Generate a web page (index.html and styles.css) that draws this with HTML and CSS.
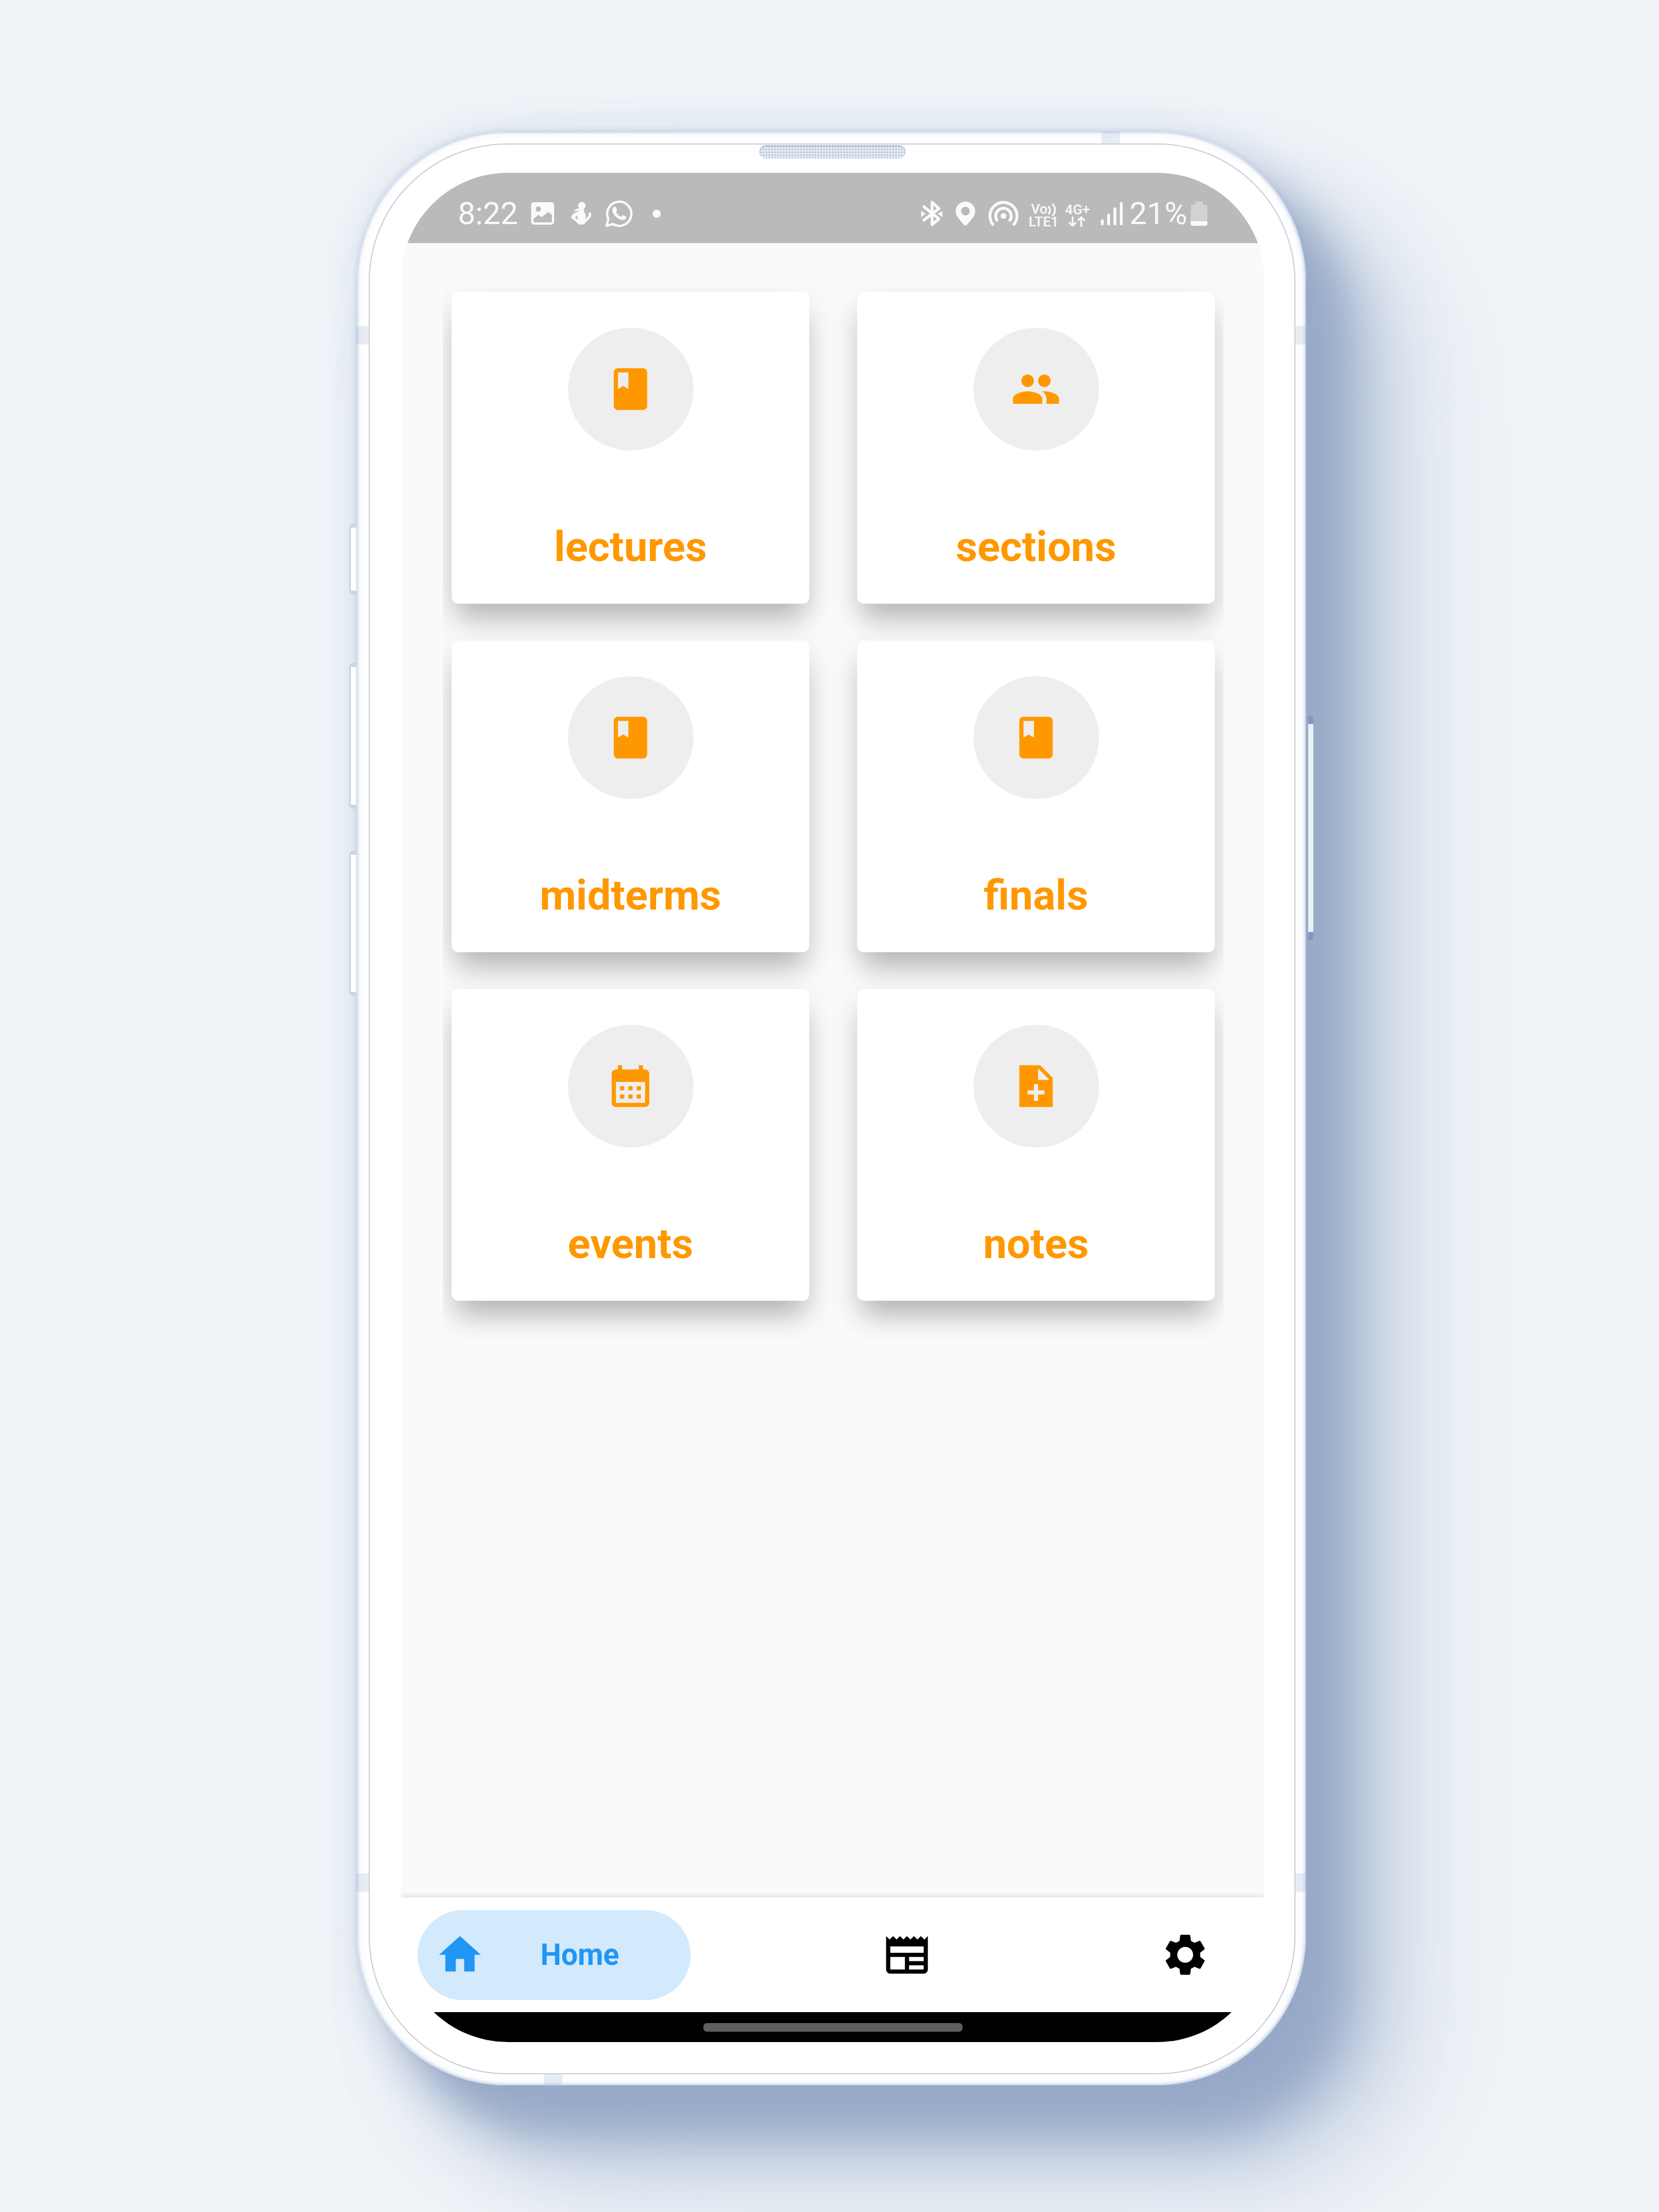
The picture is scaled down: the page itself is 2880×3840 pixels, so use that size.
FILE: index.html
```html
<!DOCTYPE html>
<html lang="en">
<head>
<meta charset="utf-8">
<meta name="viewport" content="width=device-width, initial-scale=1">
<title>Home</title>
<link rel="stylesheet" href="styles.css">
</head>
<body>
<main class="stage">
  <div class="phone">
    <span class="side-key side-key--mute"></span>
    <span class="side-key side-key--up"></span>
    <span class="side-key side-key--down"></span>
    <span class="power-key"></span>
    <span class="band band--top"></span>
    <span class="band band--bottom"></span>
    <span class="band band--left band--high"></span>
    <span class="band band--left band--low"></span>
    <span class="band band--right band--high"></span>
    <span class="band band--right band--low"></span>
    <div class="bezel">
      <span class="speaker"></span>
      <div class="screen">
        <header class="status">
          <div class="status-group status-group--left">
            <span class="status-text">8:22</span>
            <svg width="40" height="40" viewBox="0 0 40 40" aria-hidden="true"><path fill-rule="evenodd" d="M5 0h30a5 5 0 0 1 5 5v29a5 5 0 0 1-5 5H5a5 5 0 0 1-5-5V5a5 5 0 0 1 5-5zM4 29v4a2 2 0 0 0 2 2h28a2 2 0 0 0 2-2V22l-6-5-12 9-5-4zM12.500 7.500a4.500 4.500 0 1 0 .1 0z"/></svg>
            <svg width="42" height="42" viewBox="0 0 42 42" aria-hidden="true"><circle cx="25" cy="7" r="6.500"/><path d="M22 11h6l1 7c4 4 3 9 2 13l6-7v-5h4v5c0 5-6 8-10 13-3 4-11 4-14 0-4-5-9-7-11-10 2-5 8-8 14-11zM13 27l5 5-1-8z" fill-rule="evenodd"/><path d="M23 12c-7-1-9 2-13 5l6-1 6-1z"/></svg>
            <svg width="48" height="48" viewBox="0 0 48 48" aria-hidden="true"><path d="M3 45l3-12a21 21 0 1 1 8 9z" fill="none" stroke="#fafafa" stroke-width="4" stroke-linejoin="round"/><path d="M14 14c2-3 5-3 6 0l1 4c0 2-2 2-1 4 2 4 5 6 8 7 2 0 2-3 4-2l5 2c2 3-3 6-6 6-9-1-18-10-18-17z"/></svg>
            <svg width="38" height="16" viewBox="0 0 38 16" aria-hidden="true"><circle cx="19" cy="8" r="7"/></svg>
          </div>
          <div class="status-group status-group--right">
            <svg width="60" height="46" viewBox="0 0 60 46" aria-hidden="true"><path d="M17 11l26 21-12 10V3l12 11-26 20" fill="none" stroke="#fafafa" stroke-width="5" stroke-linejoin="round" stroke-linecap="round"/><path d="M12 18l8 5-8 6zM49 18l-8 5 8 6z"/></svg>
            <svg width="46" height="42" viewBox="0 0 46 42" aria-hidden="true"><path fill-rule="evenodd" d="M23 0a17 17 0 0 1 17 17c0 8-7 14-14 23q-3 3-6 0C13 31 6 25 6 17A17 17 0 0 1 23 0zM23 9a7.500 7.500 0 1 0 .1 0z"/></svg>
            <svg width="74" height="46" viewBox="0 0 74 46" aria-hidden="true"><circle cx="37" cy="27" r="5"/><g fill="none" stroke="#fafafa" stroke-width="5"><path d="M20 43a23.500 23.500 0 1 1 34 0"/><path d="M27 36a13.500 13.500 0 1 1 20 0"/></g></svg>
            <span class="network network--lte"><span class="network-row network-row--volte">Vo<svg width="16" height="24" viewBox="0 0 16 24" aria-hidden="true"><path d="M2 6q6 7 0 14M9 2q9 10 0 21" fill="none" stroke="#fafafa" stroke-width="3"/></svg></span><span class="network-row">LTE1</span></span>
            <span class="network network--4g"><span class="network-row">4G+</span><svg class="arrows" width="32" height="20" viewBox="0 0 30 20" aria-hidden="true"><path d="M7 1v16M1 11l6 6 6-6M22 19V2M16 8l6-6 6 6" fill="none" stroke="#fafafa" stroke-width="3"/></svg></span>
            <svg width="44" height="40" viewBox="0 0 44 40" aria-hidden="true"><rect y="30" width="5" height="10" rx="2"/><rect x="11" y="20" width="5" height="20" rx="2"/><rect x="22" y="9" width="5" height="31" rx="2"/><rect x="33" width="5" height="40" rx="2"/></svg>
            <span class="status-text">21%</span>
            <svg width="29" height="44" viewBox="0 0 29 44" aria-hidden="true"><path fill="#d2d2d2" d="M8 1h13v5h4a4 4 0 0 1 4 4v29a4 4 0 0 1-4 4H4a4 4 0 0 1-4-4V10a4 4 0 0 1 4-4h4z"/><path d="M0 35h29v4a4 4 0 0 1-4 4H4a4 4 0 0 1-4-4z"/></svg>
          </div>
        </header>
        <section class="cards">
          <a class="card" href="#lectures"><span class="disc"><svg class="icon" viewBox="0 0 24 24" aria-hidden="true"><path d="M18 2H6c-1.100 0-2 .9-2 2v16c0 1.100.9 2 2 2h12c1.100 0 2-.9 2-2V4c0-1.100-.9-2-2-2zM6 4h5v8l-2.500-1.500L6 12V4z"/></svg></span><span class="card-label">lectures</span></a>
          <a class="card" href="#sections"><span class="disc"><svg class="icon" viewBox="0 0 24 24" aria-hidden="true"><path d="M16 11c1.660 0 2.990-1.340 2.990-3S17.660 5 16 5s-3 1.340-3 3 1.340 3 3 3zm-8 0c1.660 0 2.990-1.340 2.990-3S9.660 5 8 5 5 6.340 5 8s1.340 3 3 3zm0 2c-2.330 0-7 1.170-7 3.500V19h14v-2.500c0-2.330-4.670-3.500-7-3.500zm8 0c-.29 0-.62.02-.97.05 1.160.84 1.970 1.970 1.970 3.450V19h6v-2.500c0-2.330-4.670-3.500-7-3.500z"/></svg></span><span class="card-label">sections</span></a>
          <a class="card" href="#midterms"><span class="disc"><svg class="icon" viewBox="0 0 24 24" aria-hidden="true"><path d="M18 2H6c-1.100 0-2 .9-2 2v16c0 1.100.9 2 2 2h12c1.100 0 2-.9 2-2V4c0-1.100-.9-2-2-2zM6 4h5v8l-2.500-1.500L6 12V4z"/></svg></span><span class="card-label">midterms</span></a>
          <a class="card" href="#finals"><span class="disc"><svg class="icon" viewBox="0 0 24 24" aria-hidden="true"><path d="M18 2H6c-1.100 0-2 .9-2 2v16c0 1.100.9 2 2 2h12c1.100 0 2-.9 2-2V4c0-1.100-.9-2-2-2zM6 4h5v8l-2.500-1.500L6 12V4z"/></svg></span><span class="card-label">finals</span></a>
          <a class="card" href="#events"><span class="disc"><svg class="icon" viewBox="0 0 24 24" aria-hidden="true"><path d="M19 4h-1V2h-2v2H8V2H6v2H5c-1.110 0-1.990.9-1.990 2L3 20c0 1.100.89 2 2 2h14c1.100 0 2-.9 2-2V6c0-1.100-.9-2-2-2zm0 16H5V10h14v10zM9 14H7v-2h2v2zm4 0h-2v-2h2v2zm4 0h-2v-2h2v2zm-8 4H7v-2h2v2zm4 0h-2v-2h2v2zm4 0h-2v-2h2v2z"/></svg></span><span class="card-label">events</span></a>
          <a class="card" href="#notes"><span class="disc"><svg class="icon" viewBox="0 0 24 24" aria-hidden="true"><path d="M14 2H4v20h16V8l-6-6zm2 14h-3v3h-2v-3H8v-2h3v-3h2v3h3v2zm-3-7V3.500L18.500 9H13z"/></svg></span><span class="card-label">notes</span></a>
        </section>
        <nav class="tabs">
          <button class="tab tab--active" type="button"><svg class="icon" viewBox="0 0 24 24" aria-hidden="true"><path d="M10 20v-6h4v6h5v-8h3L12 3 2 12h3v8z"/></svg><span class="tab-label">Home</span></button>
          <button class="tab" type="button" aria-label="News"><svg class="icon" viewBox="0 0 24 24" aria-hidden="true"><path d="M22 3l-1.670 1.670L18.670 3 17 4.670 15.330 3l-1.660 1.670L12 3l-1.670 1.670L8.670 3 7 4.670 5.330 3 3.670 4.670 2 3v16c0 1.100.9 2 2 2h16c1.100 0 2-.9 2-2V3zM11 19H4v-6h7v6zm9 0h-7v-2h7v2zm0-4h-7v-2h7v2zm0-4H4V8h16v3z"/></svg></button>
          <button class="tab" type="button" aria-label="Settings"><svg class="icon" viewBox="0 0 24 24" aria-hidden="true"><path d="M19.140 12.940c.04-.3.06-.61.06-.94 0-.32-.02-.64-.07-.94l2.030-1.580c.18-.14.23-.41.12-.61l-1.920-3.320c-.12-.22-.37-.29-.59-.22l-2.390.96c-.5-.38-1.030-.7-1.620-.94l-.36-2.540c-.04-.24-.24-.41-.48-.41h-3.840c-.24 0-.43.17-.47.41l-.36 2.540c-.59.24-1.130.57-1.620.94l-2.390-.96c-.22-.08-.47 0-.59.22L2.740 8.870c-.12.21-.08.47.12.61l2.030 1.580c-.05.3-.09.63-.09.94s.02.64.07.94l-2.030 1.580c-.18.14-.23.41-.12.61l1.920 3.320c.12.22.37.29.59.22l2.390-.96c.5.38 1.030.7 1.620.94l.36 2.540c.05.24.24.41.48.41h3.840c.24 0 .44-.17.47-.41l.36-2.540c.59-.24 1.130-.56 1.620-.94l2.390.96c.22.08.47 0 .59-.22l1.920-3.320c.12-.22.07-.47-.12-.61l-2.010-1.580zM12 15.800c-2.100 0-3.800-1.700-3.800-3.800s1.700-3.800 3.800-3.800 3.800 1.700 3.800 3.800-1.700 3.800-3.800 3.800z"/></svg></button>
        </nav>
        <footer class="gesture"><span class="gesture-pill"></span></footer>
      </div>
    </div>
  </div>
</main>
</body>
</html>
```
FILE: styles.css
```css
* {
  box-sizing: border-box;
}

body {
  margin: 0;
  background: #f0f4f8;
  font-family: Roboto, "Liberation Sans", sans-serif;
}

.stage {
  display: grid;
  grid-template-columns: 619fr 1648fr 613fr;
  min-height: 100vh;
  padding: 228px 0 220px;
  overflow: hidden;
}

/* Handset */
.phone {
  position: relative;
  grid-column: 2;
  display: flex;
  padding: 21px 18px 19px 21px;
  border-radius: 260px;
  background: #fff;
  box-shadow:
    inset 0 0 4px 2px #c3d0e4,
    inset 0 0 18px 2px #eef2f9,
    0 0 10px rgba(150, 172, 210, 0.4),
    66px 76px 76px -6px #98a9c7,
    105px 110px 130px -6px rgba(150, 170, 202, 0.75),
    180px 160px 220px rgba(175, 190, 214, 0.45),
    0 0 70px 0 rgba(170, 187, 215, 0.3);
}

.bezel {
  position: relative;
  flex: 1;
  display: flex;
  padding: 49px 52px 54px 54px;
  border: 2px solid #cdd0d8;
  border-radius: 240px;
  background: #fff;
}

.screen {
  flex: 1;
  display: flex;
  flex-direction: column;
  min-width: 0;
  border-radius: 186px;
  background: #fafafa;
  overflow: hidden;
}

.speaker {
  position: absolute;
  top: 1px;
  left: 50%;
  width: 254px;
  height: 23px;
  margin-left: -127px;
  border-radius: 12px;
  background:
    radial-gradient(circle, #b4c0d4 1px, transparent 2px) 0 0 / 5px 5px,
    #e6ebf5;
  box-shadow: inset 0 2px 3px #aebcd4;
}

.band {
  position: absolute;
  background: rgba(165, 178, 212, 0.25);
}

.band--top {
  top: 0;
  right: 323px;
  width: 32px;
  height: 22px;
}

.band--bottom {
  bottom: -4px;
  left: 325px;
  width: 32px;
  height: 24px;
}

.band--left,
.band--right {
  width: 22px;
  height: 32px;
}

.band--left {
  left: -1px;
}

.band--right {
  right: -4px;
}

.band--high {
  top: 338px;
}

.band--low {
  bottom: 336px;
}

.side-key {
  position: absolute;
  left: -13px;
  width: 14px;
  border: 3px solid #cbd5e5;
  border-right: 2px solid #dbe3ef;
  border-top-width: 7px;
  border-bottom-width: 7px;
  border-radius: 7px 0 0 7px;
  background: #fff;
}

.side-key--mute {
  top: 681px;
  height: 123px;
}

.side-key--up {
  top: 923px;
  height: 253px;
}

.side-key--down {
  top: 1249px;
  height: 252px;
}

.power-key {
  position: absolute;
  top: 1015px;
  right: -13px;
  width: 9px;
  height: 389px;
  border: solid #7f98bf;
  border-width: 14px 0;
  border-radius: 0 6px 6px 0;
  background: #eaf0f7;
}

/* Status bar */
.status {
  display: flex;
  justify-content: space-between;
  height: 122px;
  padding: 20px 99px 0;
  background: #bababa;
  color: #fafafa;
}

.status svg {
  flex: none;
  fill: #fafafa;
}

.status-group {
  display: flex;
  align-items: center;
}

.status-group--left {
  gap: 23px;
}

.status-group--right {
  gap: 6px;
}

.status-text {
  font-size: 54px;
  line-height: 64px;
}

.network {
  display: flex;
  flex-direction: column;
  padding: 6px 0 0 1px;
  font-size: 24px;
  font-weight: 500;
  line-height: 22px;
}

.network--lte {
  width: 58px;
}

.network--4g {
  width: 56px;
  padding-left: 0;
}

.network-row {
  display: flex;
  height: 22px;
}

.network-row--volte {
  padding-left: 4px;
}

.arrows {
  margin-left: 5px;
}

/* Shortcut cards */
.cards {
  flex: 1;
  display: grid;
  grid-template-columns: 1fr 1fr;
  align-content: start;
  gap: 64px 83px;
  margin: 0 71px 0 73px;
  padding: 85px 15px 100px;
  overflow: hidden;
}

.card {
  display: flex;
  flex-direction: column;
  align-items: center;
  gap: 125px;
  padding: 62px 0 57px;
  border-radius: 12px;
  background: #fff;
  box-shadow:
    0 38px 44px -12px rgba(0, 0, 0, 0.18),
    0 22px 52px rgba(0, 0, 0, 0.12);
  color: #ff9800;
  text-decoration: none;
}

.disc {
  display: flex;
  align-items: center;
  justify-content: center;
  width: 218px;
  height: 213px;
  border-radius: 50%;
  background: #eee;
}

.icon {
  flex: none;
  width: 87px;
  height: 87px;
  fill: currentColor;
}

.card-label {
  font-size: 73px;
  font-weight: 700;
  line-height: 84px;
}

/* Bottom navigation */
.tabs {
  position: relative;
  display: flex;
  align-items: center;
  justify-content: space-between;
  height: 199px;
  padding: 0 29px;
  background: #fff;
  box-shadow: 0 0 12px rgba(0, 0, 0, 0.16);
}

.tab {
  display: flex;
  align-items: center;
  justify-content: center;
  width: 217px;
  height: 156px;
  padding: 0;
  border: 0;
  border-radius: 78px;
  background: none;
  color: #000;
  font: inherit;
}

.tab--active {
  width: 474px;
  padding: 0 28px 0 30px;
  background: #d3e9fc;
  color: #2196f3;
}

.tab-label {
  flex: 1;
  font-size: 51px;
  font-weight: 700;
  line-height: 60px;
}

.gesture {
  position: relative;
  display: flex;
  justify-content: center;
  height: 52px;
  padding-top: 19px;
  background: #000;
}

.gesture-pill {
  width: 450px;
  height: 15px;
  border-radius: 6px;
  background: #5e5e5e;
}
```
